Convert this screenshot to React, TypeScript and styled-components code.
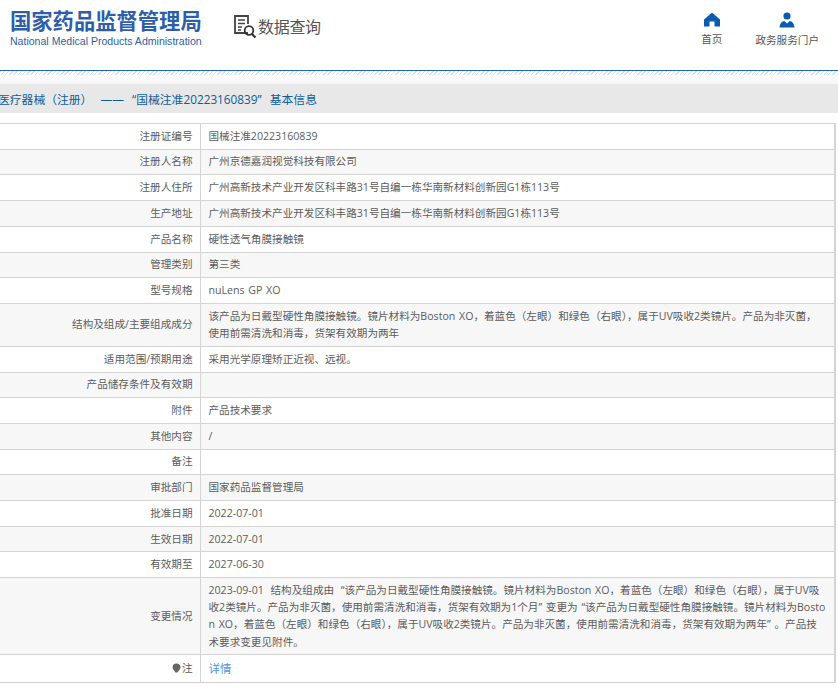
import React from "react";
import styled, { createGlobalStyle } from "styled-components";

const rows: { label: string; prefix?: string; value?: string }[] = [
  { label: "注册证编号", value: "国械注准20223160839" },
  { label: "注册人名称", value: "广州京德嘉润视觉科技有限公司" },
  { label: "注册人住所", value: "广州高新技术产业开发区科丰路31号自编一栋华南新材料创新园G1栋113号" },
  { label: "生产地址", value: "广州高新技术产业开发区科丰路31号自编一栋华南新材料创新园G1栋113号" },
  { label: "产品名称", value: "硬性透气角膜接触镜" },
  { label: "管理类别", value: "第三类" },
  { label: "型号规格", value: "nuLens GP XO" },
  {
    label: "结构及组成/主要组成成分",
    value:
      "该产品为日戴型硬性角膜接触镜。镜片材料为Boston XO，着蓝色（左眼）和绿色（右眼），属于UV吸收2类镜片。产品为非灭菌，使用前需清洗和消毒，货架有效期为两年",
  },
  { label: "适用范围/预期用途", value: "采用光学原理矫正近视、远视。" },
  { label: "产品储存条件及有效期" },
  { label: "附件", value: "产品技术要求" },
  { label: "其他内容", value: "/" },
  { label: "备注" },
  { label: "审批部门", value: "国家药品监督管理局" },
  { label: "批准日期", value: "2022-07-01" },
  { label: "生效日期", value: "2022-07-01" },
  { label: "有效期至", value: "2027-06-30" },
  {
    label: "变更情况",
    prefix: "2023-09-01 结构及组成由 “",
    value:
      "该产品为日戴型硬性角膜接触镜。镜片材料为Boston XO，着蓝色（左眼）和绿色（右眼），属于UV吸收2类镜片。产品为非灭菌，使用前需清洗和消毒，货架有效期为1个月” 变更为 “该产品为日戴型硬性角膜接触镜。镜片材料为Boston XO，着蓝色（左眼）和绿色（右眼），属于UV吸收2类镜片。产品为非灭菌，使用前需清洗和消毒，货架有效期为两年” 。产品技术要求变更见附件。",
  },
];

export default function App() {
  return (
    <>
      <GlobalStyle />
      <Header>
        <Brand>
          <BrandName>国家药品监督管理局</BrandName>
          <BrandEnglish>National Medical Products Administration</BrandEnglish>
        </Brand>
        <QueryTitle>
          <svg width="25" height="26" viewBox="0 0 25 26" fill="none">
            <path d="M15 19H2V2h13v8" stroke="#444" strokeWidth="1.8" />
            <path d="M5 6h7M5 9.500h7M5 13h4M5 16h3" stroke="#444" strokeWidth="1.3" />
            <circle cx="16" cy="16.500" r="4.300" stroke="#333" strokeWidth="1.800" />
            <path d="M19 20l3.500 3.500" stroke="#333" strokeWidth="2.200" />
          </svg>
          <span>数据查询</span>
        </QueryTitle>
        <Nav>
          <NavItem>
            <svg width="16" height="15" viewBox="0 0 16 15">
              <path d="M8 0.500L16 7.500V14.500H10.500V9.500H5.500V14.500H0V7.500Z" fill="#0b5cad" />
            </svg>
            <span>首页</span>
          </NavItem>
          <NavItem>
            <svg width="16" height="16" viewBox="0 0 16 16">
              <circle cx="8" cy="4" r="3.600" fill="#0b5cad" />
              <path d="M0.500 15.500C1 11 3 9.500 5.300 9L8 11.500L10.700 9C13 9.500 15 11 15.500 15.500Z" fill="#0b5cad" />
            </svg>
            <span>政务服务门户</span>
          </NavItem>
        </Nav>
      </Header>
      <Stripe />
      <TitleBar>医疗器械（注册） —— “国械注准20223160839” 基本信息</TitleBar>
      <Table>
        <tbody>
          {rows.map((row) => (
            <Row key={row.label}>
              <LabelCell>{row.label}</LabelCell>
              <ValueCell>
                {row.prefix && <ChangePrefix>{row.prefix}</ChangePrefix>}
                {row.value}
              </ValueCell>
            </Row>
          ))}
          <Row>
            <LabelCell>
              <BulbIcon width="9" height="10" viewBox="0 0 9 10">
                <path d="M4.500 0.500C7 0.500 8.500 2.200 8.500 4.300C8.500 6.400 6.400 7.600 5.500 9.500H3.500C2.600 7.600 0.500 6.400 0.500 4.300C0.500 2.200 2 0.500 4.500 0.500Z" fill="#666" />
              </BulbIcon>
              注
            </LabelCell>
            <ValueCell>
              <DetailLink>详情</DetailLink>
            </ValueCell>
          </Row>
        </tbody>
      </Table>
    </>
  );
}

const GlobalStyle = createGlobalStyle`
  html, body {
    margin: 0;
    padding: 0;
    background: #fff;
    overflow: hidden;
  }
  body {
    font-family: "Open Sans", "Noto Sans CJK SC", sans-serif;
    color: #5c5c5c;
    font-size: 10.6px;
  }
`;

const Header = styled.div`
  height: 71px;
  display: flex;
  align-items: flex-start;
  border-bottom: 1px solid #1f68a3;
  box-sizing: border-box;
`;

const Brand = styled.div`
  width: 192px;
  margin: 7px 0 0 10px;
  display: flex;
  flex-direction: column;
`;

const BrandName = styled.div`
  font-size: 21.3px;
  line-height: 27px;
  font-weight: 700;
  color: #2f5ea8;
  white-space: nowrap;
`;

const BrandEnglish = styled.div`
  font-family: "Liberation Sans", sans-serif;
  font-size: 10.55px;
  line-height: 13px;
  margin-top: 1px;
  color: #2f5ea8;
  white-space: nowrap;
`;

const QueryTitle = styled.div`
  margin: 14px 0 0 31px;
  display: flex;
  align-items: center;
  font-size: 16px;
  line-height: 26px;
  color: #555;
  letter-spacing: -0.3px;
`;

const Nav = styled.div`
  margin-left: auto;
  margin-right: 19px;
  padding-top: 12px;
  display: flex;
  gap: 33px;
`;

const NavItem = styled.div`
  display: flex;
  flex-direction: column;
  align-items: center;
  gap: 5px;
  color: #555;
  font-size: 10.6px;
  line-height: 14px;
`;

const Stripe = styled.div`
  height: 13px;
  background:
    repeating-linear-gradient(135deg, #d3e3ee 0 1px, #fff 1px 3px) top / 100% 4px no-repeat,
    linear-gradient(#fff, #f6f6f6);
`;

const TitleBar = styled.div`
  height: 29px;
  line-height: 30px;
  margin-bottom: 10px;
  background: #e8e8e8;
  color: #0e5c9b;
  font-size: 11.8px;
  text-indent: -2px;
  word-spacing: 5px;
  white-space: nowrap;
`;

const Table = styled.table`
  border-collapse: collapse;
  table-layout: fixed;
  width: 839px;
  margin-left: -3px;
  border-top: 1px solid #d0d0d0;
  border-bottom: 1px solid #d0d0d0;
  border-right: 2px solid #d4d4d4;
`;

const Row = styled.tr`
  &:nth-child(even) {
    background: #f7f7f7;
  }
`;

const LabelCell = styled.td`
  width: 203px;
  box-sizing: border-box;
  padding: 3.750px 7px;
  text-align: right;
  border-top: 1px solid #d4d4d4;
  border-right: 1px solid #d4d4d4;
  line-height: 17.200px;
`;

const ValueCell = styled.td`
  padding: 3.750px 8.500px 3.750px 8px;
  border-top: 1px solid #d4d4d4;
  line-height: 17.200px;
  word-break: break-all;
  word-spacing: 1px;
`;

const ChangePrefix = styled.span`
  word-spacing: 4px;
`;

const DetailLink = styled.span`
  display: inline-block;
  padding: 1px 0;
  color: #4c94de;
  font-size: 11.4px;
`;

const BulbIcon = styled.svg`
  vertical-align: -1px;
  margin-right: 1px;
`;
